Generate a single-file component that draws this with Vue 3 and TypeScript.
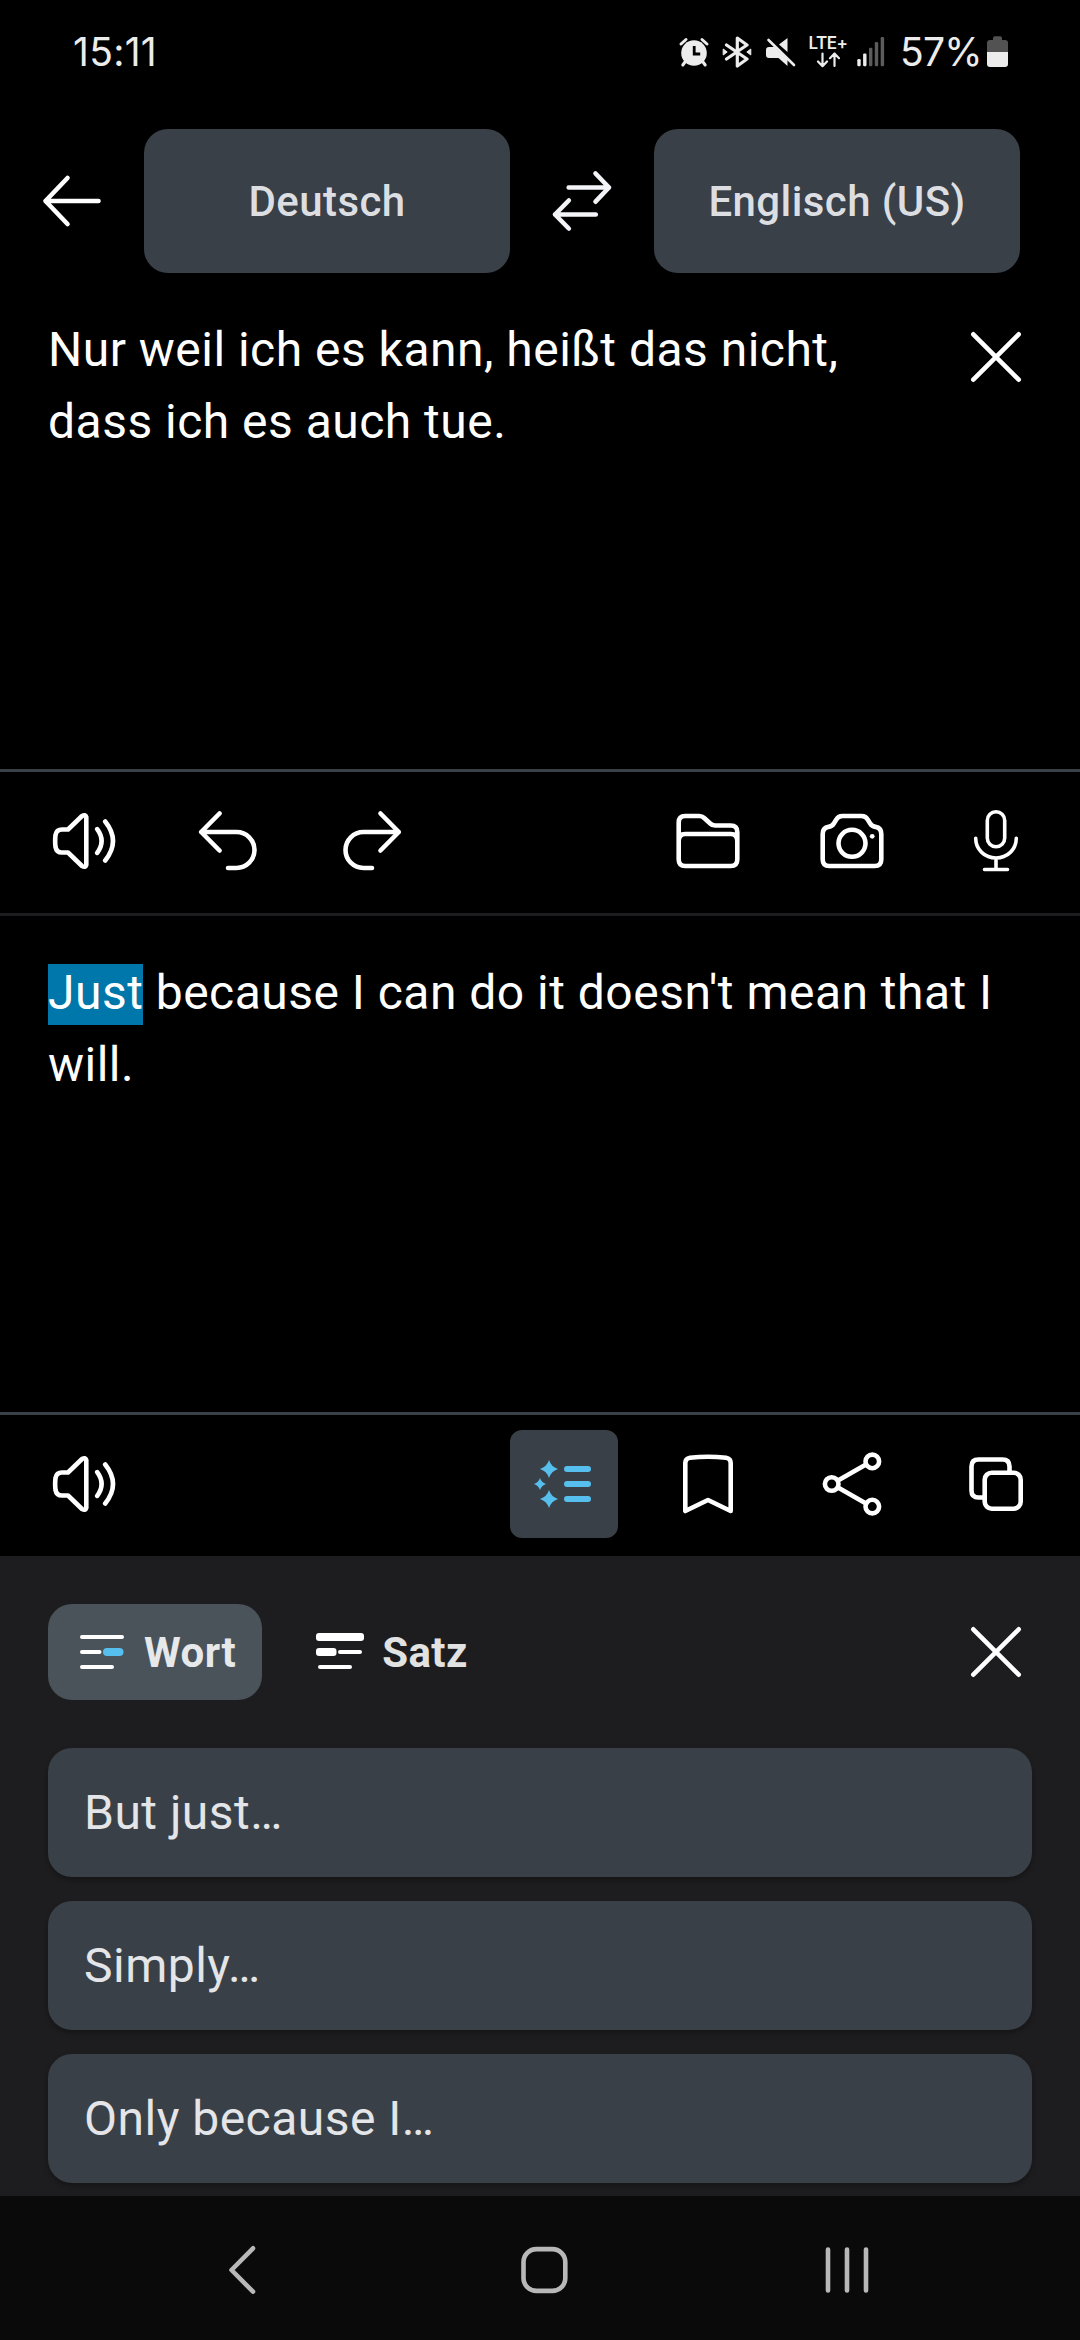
<script setup lang="ts">
import { ref } from 'vue'

type Mode = 'word' | 'sentence'

const mode = ref<Mode>('word')
const sourceText = 'Nur weil ich es kann, heißt das nicht, dass ich es auch tue.'
const selectedWord = 'Just'
const restOfTranslation = " because I can do it doesn't mean that I will."
const alternatives: string[] = ['But just…', 'Simply…', 'Only because I…']
</script>

<template>
  <div class="screen">
    <div class="status">
      <span class="clock">15:11</span>
      <div class="indicators">
        <svg class="alarm" width="32" height="32" viewBox="0 0 32 32">
          <path d="M3 8 8 3.500M29 8 24 3.500M7 26 4.800 29M25 26l2.200 3" fill="none" stroke="#ececec" stroke-width="3" stroke-linecap="round" />
          <circle cx="16" cy="17" r="12.800" fill="#ececec" />
          <path d="M16.200 10v8h6" fill="none" stroke="#000" stroke-width="2.800" />
        </svg>
        <svg class="bt" width="32" height="32" viewBox="0 0 32 32">
          <path d="M5.500 9 26 23l-9.700 7V2L26 9 5.500 23" fill="none" stroke="#ececec" stroke-width="3.200" stroke-linecap="round" stroke-linejoin="round" />
          <path d="m2.200 13 4 3-4 3zM29.800 13l-4 3 4 3z" fill="#ececec" stroke="#ececec" stroke-linejoin="round" />
        </svg>
        <svg class="mute" width="32" height="32" viewBox="0 0 32 32">
          <path d="M22.500 2v14L14 8.500zM4 11h5.500l13 12.500V30L13.500 22H4q-3 0-3-3v-5q0-3 3-3z" fill="#ececec" />
          <path d="m3.500 4 25.500 25" fill="none" stroke="#ececec" stroke-width="2.600" stroke-linecap="round" />
        </svg>
        <div class="lte">
          <span>LTE+</span>
          <svg width="24" height="16" viewBox="0 0 24 16">
            <path d="M6.500 1.500v12M2 9.500l4.500 4.700L11 9.500M18.500 14V2M14 6.200l4.500-4.700L23 6.200" fill="none" stroke="#ececec" stroke-width="2.200" stroke-linecap="round" stroke-linejoin="round" />
          </svg>
        </div>
        <svg class="signal" width="28" height="32" viewBox="0 0 28 32">
          <g fill="#ececec"><rect x=".3" y="23" width="3.400" height="7.300" rx="1.200" /><rect x="6.100" y="17.500" width="3.400" height="12.800" rx="1.200" /></g>
          <g fill="#5c5c5c"><rect x="12" y="11.700" width="3.400" height="18.600" rx="1.200" /><rect x="17.800" y="6" width="3.400" height="24.300" rx="1.200" /><rect x="23.700" y="1" width="3.400" height="29.300" rx="1.200" /></g>
        </svg>
        <span class="percent">57%</span>
        <svg class="battery" width="21" height="32" viewBox="0 0 21 32">
          <path d="M0 16V7q0-3 3-3h3V2q0-1.800 2-1.800h5q2 0 2 1.800v2h3q3 0 3 3v9z" fill="#525252" />
          <path d="M0 16h21v12q0 3-3 3H3q-3 0-3-3z" fill="#ececec" />
        </svg>
      </div>
    </div>

    <div class="languages">
      <button class="cell" aria-label="Zurück">
        <svg class="icon" viewBox="-36 -36 72 72"><path d="M26.500 0h-53L-4.500-23M-26.500 0l22 23" /></svg>
      </button>
      <button class="lang">Deutsch</button>
      <button class="cell" aria-label="Sprachen tauschen">
        <svg class="icon pale" viewBox="-36 -36 72 72"><path d="M-13.300-13.500H27L13.500-27.500M27-13.500 13.500.7M13.800 13.500H-27l13.800-14M-27 13.500l13.800 14" /></svg>
      </button>
      <button class="lang">Englisch (US)</button>
    </div>

    <div class="source">
      <p class="text">{{ sourceText }}</p>
      <button class="cell close" aria-label="Löschen">
        <svg class="icon" viewBox="-36 -36 72 72"><path d="m-22.700-22.700 45.400 45.400m0-45.400-45.400 45.400" /></svg>
      </button>
    </div>

    <div class="toolbar">
      <button class="cell" aria-label="Vorlesen">
        <svg class="icon" viewBox="-36 -36 72 72"><path d="M-16-11.500h-6q-5.500 0-6.500 5.500-.7 6 0 12 1 5.500 6.500 5.500h6L-2 25q3.500 2 4.300-1v-48Q1.500-27-2-25zM13.200-11.800q8.800 11.800 0 23.600M21.200-19.500q15.600 19.500 0 39" /></svg>
      </button>
      <button class="cell" aria-label="Rückgängig">
        <svg class="icon" viewBox="-36 -36 72 72"><path d="M-8.500-27.500-26.800-9-8.500 9.500M-26.800-9H8.500a18 18 0 0 1 0 36H0" /></svg>
      </button>
      <button class="cell" aria-label="Wiederholen">
        <svg class="icon" viewBox="-36 -36 72 72"><path d="M8.500-27.500 26.800-9 8.500 9.500M26.800-9H-8.500a18 18 0 0 0 0 36H0" /></svg>
      </button>
      <span class="spacer"></span>
      <button class="cell" aria-label="Dokument">
        <svg class="icon" viewBox="-36 -36 72 72"><path d="M-29.300 0v-18.500q0-6.500 6.500-6.500h14q3 0 5 2l6 5.500q2 2 5 2h15.500q6.600 0 6.600 6.500V18.500q0 6.500-6.500 6.500h-45.600q-6.500 0-6.500-6.500V0q0-7 6.500-7h45.600q6.500 0 6.500 7" /></svg>
      </button>
      <button class="cell" aria-label="Kamera">
        <svg class="icon" viewBox="-36 -36 72 72">
          <path d="M-9.500-25H9.500q4.500 0 6.500 4l2 3.200q2 3.300 5.500 3.700 5.800.8 5.800 7.100V18.500q0 6.500-6.500 6.500h-45.600q-6.500 0-6.500-6.500V-7q0-6.300 5.800-7.100 3.500-.4 5.500-3.700l2-3.200q2-4 6.500-4z" />
          <circle cx="0" cy="2.300" r="13.500" /><circle class="dot" cx="20.200" cy="-4.700" r="2.400" />
        </svg>
      </button>
      <button class="cell" aria-label="Spracheingabe">
        <svg class="icon thin" viewBox="-36 -36 72 72"><rect x="-8.700" y="-29.300" width="17.400" height="35" rx="8.700" /><path d="M-20.300-2.700C-20.300 8.500-11.200 17 0 17S20.300 8.500 20.300-2.700M0 17v11.500M-11.500 28.500h23" /></svg>
      </button>
    </div>

    <div class="target">
      <p class="text"><mark>{{ selectedWord }}</mark>{{ restOfTranslation }}</p>
    </div>

    <div class="toolbar">
      <button class="cell" aria-label="Vorlesen">
        <svg class="icon" viewBox="-36 -36 72 72"><path d="M-16-11.500h-6q-5.500 0-6.500 5.500-.7 6 0 12 1 5.500 6.500 5.500h6L-2 25q3.500 2 4.300-1v-48Q1.500-27-2-25zM13.200-11.800q8.800 11.800 0 23.600M21.200-19.500q15.600 19.500 0 39" /></svg>
      </button>
      <span class="spacer"></span>
      <button class="cell" aria-label="Alternativen">
        <span class="active">
          <svg width="72" height="72" viewBox="-36 -36 72 72" fill="#56bfee">
            <path d="M-15-24q2.200 6.800 9 9-6.800 2.200-9 9-2.200-6.800-9-9 6.800-2.200 9-9zM-15 6q2.200 6.800 9 9-6.800 2.200-9 9-2.200-6.800-9-9 6.800-2.200 9-9zM-24-6q1.500 4.500 6 6-4.500 1.500-6 6-1.500-4.500-6-6 4.500-1.500 6-6z" />
            <rect x="0" y="-18" width="27" height="6" rx="3" /><rect x="0" y="-3" width="27" height="6" rx="3" /><rect x="0" y="12" width="27" height="6" rx="3" />
          </svg>
        </span>
      </button>
      <button class="cell" aria-label="Speichern">
        <svg class="icon" viewBox="-36 -36 72 72"><path d="M-22.700 27v-48q0-4.500 4.700-5.300 18-2 36 0 4.700.8 4.700 5.300v48L0 16z" /></svg>
      </button>
      <button class="cell" aria-label="Teilen">
        <svg class="icon" viewBox="-36 -36 72 72"><circle cx="-20.300" cy="0" r="6.800" /><circle cx="20.300" cy="-22.600" r="6.800" /><circle cx="20.300" cy="22.600" r="6.800" /><path d="m-14-3.600 28-15.800M-14 3.600l28 15.800" /></svg>
      </button>
      <button class="cell" aria-label="Kopieren">
        <svg class="icon" viewBox="-36 -36 72 72"><rect x="-11.300" y="-11.300" width="36" height="36" rx="7" /><path d="M-11.300 13.500h-6.200q-7 0-7-7v-24q0-7 7-7h24q7 0 7 7v6.200" /></svg>
      </button>
    </div>

    <div class="panel">
      <div class="tabs">
        <button class="tab" :class="{ on: mode === 'word' }" @click="mode = 'word'">
          <svg width="48" height="48" viewBox="0 0 48 48">
            <g fill="#fff"><rect x="2" y="7" width="44" height="4" rx="2" /><rect x="2" y="22" width="21.500" height="4" rx="2" /><rect x="2" y="37" width="34" height="4" rx="2" /></g>
            <rect x="25" y="20" width="20.500" height="8" rx="4" fill="#56bfee" />
          </svg>
          <span>Wort</span>
        </button>
        <button class="tab" :class="{ on: mode === 'sentence' }" @click="mode = 'sentence'">
          <svg width="48" height="48" viewBox="0 0 48 48" fill="#fff">
            <rect x="0" y="5" width="48" height="8" rx="3" /><rect x="0" y="20" width="20.500" height="8" rx="3" /><rect x="22" y="22" width="24" height="4" rx="2" /><rect x="2" y="37" width="34" height="4" rx="2" />
          </svg>
          <span>Satz</span>
        </button>
        <span class="spacer"></span>
        <button class="cell" aria-label="Schließen">
          <svg class="icon" viewBox="-36 -36 72 72"><path d="m-22.700-22.700 45.400 45.400m0-45.400-45.400 45.400" /></svg>
        </button>
      </div>
      <button v-for="item in alternatives" :key="item" class="card">{{ item }}</button>
    </div>

    <div class="nav">
      <svg width="72" height="72" viewBox="-36 -36 72 72"><path d="M9-21.700-12.500 0 9 21.700" /></svg>
      <svg width="72" height="72" viewBox="-36 -36 72 72"><rect x="-22.500" y="-20.900" width="41.800" height="41.800" rx="13" /></svg>
      <svg width="72" height="72" viewBox="-36 -36 72 72"><path d="M-19-20.500v41M0-20.500v41M19-20.500v41" /></svg>
    </div>
  </div>
</template>

<style>
body {
  margin: 0;
  background: #000;
}
</style>

<style scoped>
.screen {
  width: 1080px;
  height: 2340px;
  display: flex;
  flex-direction: column;
  overflow: hidden;
  background: #000;
  color: #fff;
  font-family: Roboto, "Liberation Sans", sans-serif;
}
button {
  margin: 0;
  padding: 0;
  border: 0;
  background: none;
  color: inherit;
  font: inherit;
}
svg {
  display: block;
  flex: none;
}
.spacer {
  flex: 1;
}
.status {
  height: 104px;
  padding: 0 72px;
  display: flex;
  align-items: center;
  justify-content: space-between;
  color: #ececec;
  font-family: Inter, Roboto, sans-serif;
  font-size: 39px;
  line-height: 48px;
}
.clock {
  padding-left: 1px;
  letter-spacing: 0.3px;
}
.indicators {
  display: flex;
  align-items: center;
}
.bt {
  margin-left: 11px;
}
.mute {
  margin-left: 12px;
}
.lte {
  width: 40px;
  height: 32px;
  margin-left: 11px;
  display: flex;
  flex-direction: column;
  align-items: center;
  justify-content: space-between;
  font-size: 17px;
  font-weight: 600;
  line-height: 14px;
  letter-spacing: -0.5px;
}
.signal {
  margin-left: 9px;
}
.percent {
  width: 80px;
  margin-left: 15px;
  letter-spacing: -0.8px;
  white-space: nowrap;
}
.battery {
  margin-left: 7px;
}
.languages {
  height: 144px;
  margin-top: 25px;
  display: flex;
}
.lang {
  width: 366px;
  border-radius: 24px;
  background: #3a4047;
  color: #dcdee2;
  font-size: 42px;
  font-weight: 500;
  letter-spacing: 0.42px;
}
.cell {
  width: 144px;
  height: 100%;
  flex: none;
  display: flex;
  align-items: center;
  justify-content: center;
}
.icon {
  width: 72px;
  height: 72px;
  fill: none;
  stroke: #fff;
  stroke-width: 4.600;
  stroke-linecap: round;
  stroke-linejoin: round;
}
.pale {
  stroke: #f3f4f7;
}
.thin {
  stroke-width: 3.600;
}
.dot {
  fill: #fff;
  stroke: none;
}
.source {
  height: 496px;
  box-sizing: border-box;
  padding: 41px 12px 0 48px;
  display: flex;
  justify-content: space-between;
}
.close {
  height: 86px;
}
.text {
  margin: 0;
  width: 800px;
  font-size: 48px;
  line-height: 72px;
  letter-spacing: 0.48px;
}
.toolbar {
  height: 144px;
  box-sizing: border-box;
  padding: 0 12px 3px;
  border-top: 3px solid #3a4047;
  display: flex;
}
.target {
  height: 499px;
  box-sizing: border-box;
  padding: 41px 48px 0;
  border-top: 3px solid #1d1d1f;
}
.target .text {
  width: 984px;
}
mark {
  padding-bottom: 4px;
  background: #0077aa;
  color: inherit;
}
.active {
  width: 108px;
  height: 108px;
  border-radius: 12px;
  background: #3a4047;
  display: flex;
  align-items: center;
  justify-content: center;
}
.panel {
  height: 640px;
  box-sizing: border-box;
  padding: 48px 48px 0;
  background: #1d1d1f;
  display: flex;
  flex-direction: column;
  gap: 24px;
}
.tabs {
  height: 96px;
  margin: 0 -36px 24px 0;
  display: flex;
  flex: none;
}
.tab {
  height: 96px;
  padding: 0 26px 0 30px;
  border-radius: 24px;
  display: flex;
  align-items: center;
  gap: 18px;
  color: #e2e2e2;
  font-size: 42px;
  font-weight: 700;
  letter-spacing: 0.42px;
}
.tab + .tab {
  margin-left: 24px;
}
.on {
  background: #4a525a;
  color: #e6e8ea;
}
.card {
  height: 129px;
  flex: none;
  padding: 0 36px;
  border-radius: 24px;
  background: #3a4047;
  box-shadow: 0 3px 5px rgba(0, 0, 0, 0.28);
  color: #e3e5e8;
  font-size: 48px;
  letter-spacing: 0.48px;
  text-align: left;
}
.nav {
  flex: 1;
  padding: 4px 197px 0 208px;
  background: #0a0a0a;
  display: flex;
  align-items: center;
  justify-content: space-between;
}
.nav svg {
  fill: none;
  stroke: #b8b8b8;
  stroke-width: 4.600;
  stroke-linecap: round;
  stroke-linejoin: round;
}
</style>
